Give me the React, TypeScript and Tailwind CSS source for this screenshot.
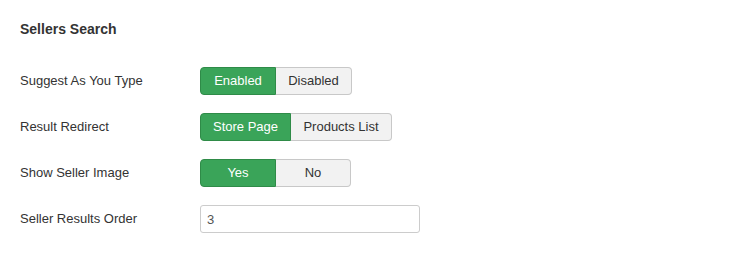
import React, { useState } from 'react';

interface ToggleOption {
  label: string;
  width: string;
}

const ToggleGroup: React.FC<{ options: ToggleOption[]; active: number; onChange: (i: number) => void }> = ({ options, active, onChange }) => (
  <div className="flex h-[28px]">
    {options.map((opt, i) => {
      const isActive = i === active;
      const first = i === 0;
      const last = i === options.length - 1;
      return (
        <button
          key={opt.label}
          onClick={() => onChange(i)}
          className={[
            opt.width,
            'h-full text-[13px] border',
            first ? 'rounded-l-[4px]' : '',
            last ? 'rounded-r-[4px]' : '',
            !first ? 'border-l-0' : '',
            isActive
              ? 'bg-[#3aa459] border-[#2f8b48] text-white'
              : 'bg-[#f2f2f2] border-[#c8c8c8] text-[#333]',
          ].join(' ')}
        >
          {opt.label}
        </button>
      );
    })}
  </div>
);

const Row: React.FC<{ label: string; children: React.ReactNode }> = ({ label, children }) => (
  <div className="flex items-center h-[28px] mb-[18px]">
    <div className="w-[180px] text-[13px] text-[#333]">{label}</div>
    {children}
  </div>
);

export default function App() {
  const [suggest, setSuggest] = useState(0);
  const [redirect, setRedirect] = useState(0);
  const [showImage, setShowImage] = useState(0);
  const [order, setOrder] = useState('3');

  return (
    <div className="w-[733px] h-[264px] bg-white pl-[20px] pt-[20px] font-['Liberation_Sans',Arial,sans-serif]">
      <h3 className="text-[14px] font-bold text-[#333] leading-[18px] mb-[29px]">Sellers Search</h3>
      <Row label="Suggest As You Type">
        <ToggleGroup
          options={[{ label: 'Enabled', width: 'w-[76px]' }, { label: 'Disabled', width: 'w-[76px]' }]}
          active={suggest}
          onChange={setSuggest}
        />
      </Row>
      <Row label="Result Redirect">
        <ToggleGroup
          options={[{ label: 'Store Page', width: 'w-[91px]' }, { label: 'Products List', width: 'w-[101px]' }]}
          active={redirect}
          onChange={setRedirect}
        />
      </Row>
      <Row label="Show Seller Image">
        <ToggleGroup
          options={[{ label: 'Yes', width: 'w-[76px]' }, { label: 'No', width: 'w-[75px]' }]}
          active={showImage}
          onChange={setShowImage}
        />
      </Row>
      <Row label="Seller Results Order">
        <input
          value={order}
          onChange={(e) => setOrder(e.target.value)}
          className="w-[220px] h-[28px] border border-[#ccc] rounded-[3px] px-[6px] text-[13px] text-[#555] outline-none"
        />
      </Row>
    </div>
  );
}
